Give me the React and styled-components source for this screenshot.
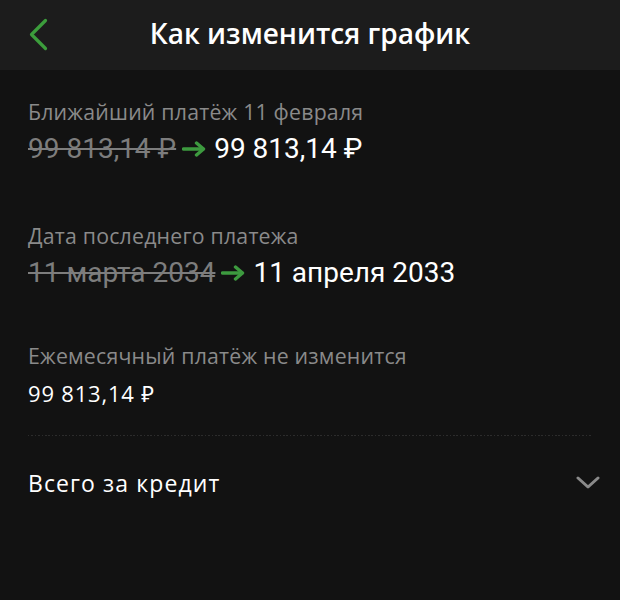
import React from "react";
import styled, { createGlobalStyle } from "styled-components";

const Global = createGlobalStyle`
  html, body { margin: 0; padding: 0; background: #121212; }
  body { font-family: "Open Sans", "Noto Sans", sans-serif; -webkit-font-smoothing: antialiased; }
`;

const Page = styled.div`
  width: 620px;
  height: 600px;
  background: #121212;
  overflow: hidden;
`;

const Header = styled.header`
  height: 70px;
  background: #1c1c1c;
  display: grid;
  grid-template-columns: 70px 1fr 70px;
  align-items: start;
`;

const BackButton = styled.button`
  background: none;
  border: 0;
  padding: 0 0 0 27px;
  display: flex;
  align-items: center;
  height: 70px;
  cursor: pointer;
`;

const Title = styled.h1`
  margin: 0;
  text-align: center;
  color: #ffffff;
  font-family: "Open Sans", sans-serif;
  font-size: 28px;
  line-height: 66px;
  font-weight: 600;
`;

const Content = styled.main`
  padding: 0 20px 0 28px;
`;

const Section = styled.section`
  padding-top: ${(p) => p.$top}px;
`;

const Label = styled.div`
  color: #8a8a8a;
  font-size: 21.3px;
  line-height: 24px;
  letter-spacing: 0.2px;
`;

const ValueRow = styled.div`
  display: flex;
  align-items: center;
  gap: 6px;
  margin-top: ${(p) => p.$gap}px;
  font-family: Roboto, sans-serif;
  font-size: 28px;
  line-height: 34px;
`;

const PlainValue = styled.div`
  margin-top: 11px;
  color: #ffffff;
  font-size: 22px;
  line-height: 28px;
  letter-spacing: 0.8px;
`;

const Old = styled.span`
  color: #7d7d7d;
  text-decoration: line-through;
  text-decoration-thickness: 2px;
`;

const New = styled.span`
  color: #ffffff;
  margin-left: 2px;
`;

const Divider = styled.div`
  margin: 28px 8px 0 0;
  height: 1px;
  background: repeating-linear-gradient(to right, #2c2c2c 0 1.5px, transparent 1.5px 3.4px);
`;

const Total = styled.div`
  display: flex;
  justify-content: space-between;
  align-items: center;
  padding-top: 33px;
  color: #ffffff;
  font-size: 23px;
  font-weight: 500;
  letter-spacing: 1.1px;
  line-height: 28px;
`;

const ArrowIcon = styled.svg`
  flex: none;
`;

const Arrow = () => (
  <ArrowIcon width="24" height="16" viewBox="0 0 24 16" fill="none">
    <path d="M1.5 8 H21" stroke="#3d9a3f" strokeWidth="3.4" strokeLinecap="round" />
    <path d="M14.5 2 L21.5 8 L14.5 14" stroke="#3d9a3f" strokeWidth="3.4" strokeLinecap="round" strokeLinejoin="round" />
  </ArrowIcon>
);

const Back = () => (
  <svg width="22" height="34" viewBox="0 0 22 34" fill="none">
    <path d="M18.5 2.5 L4.5 16.5 L18.5 30.5" stroke="#3c9d3c" strokeWidth="3.2" strokeLinecap="round" strokeLinejoin="round" />
  </svg>
);

const Chevron = () => (
  <svg width="24" height="14" viewBox="0 0 24 14" fill="none">
    <path d="M2 2 L12 11 L22 2" stroke="#8a8a8a" strokeWidth="3" strokeLinecap="round" strokeLinejoin="round" />
  </svg>
);

export default function App() {
  return (
    <Page>
      <Global />
      <Header>
        <BackButton aria-label="Назад"><Back /></BackButton>
        <Title>Как изменится график</Title>
        <span />
      </Header>
      <Content>
        <Section $top={30}>
          <Label>Ближайший платёж 11 февраля</Label>
          <ValueRow $gap={8}>
            <Old>99 813,14 ₽</Old>
            <Arrow />
            <New>99 813,14 ₽</New>
          </ValueRow>
        </Section>
        <Section $top={58}>
          <Label>Дата последнего платежа</Label>
          <ValueRow $gap={8}>
            <Old>11 марта 2034</Old>
            <Arrow />
            <New>11 апреля 2033</New>
          </ValueRow>
        </Section>
        <Section $top={54}>
          <Label>Ежемесячный платёж не изменится</Label>
          <PlainValue>99 813,14 ₽</PlainValue>
        </Section>
        <Divider />
        <Total>
          <span>Всего за кредит</span>
          <Chevron />
        </Total>
      </Content>
    </Page>
  );
}
